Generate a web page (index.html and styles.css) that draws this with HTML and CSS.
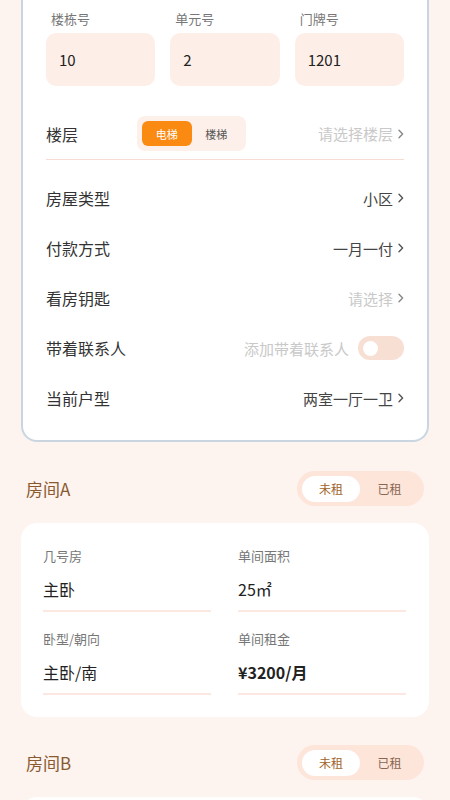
FILE: index.html
```html
<!DOCTYPE html>
<html lang="zh-CN">
<head>
<meta charset="utf-8">
<link rel="stylesheet" href="styles.css">
</head>
<body>
<div class="page">
  <div class="card main-card">
    <div class="addr">
      <div class="addr-col">
        <div class="addr-label">楼栋号</div>
        <div class="addr-input">10</div>
      </div>
      <div class="addr-col">
        <div class="addr-label">单元号</div>
        <div class="addr-input">2</div>
      </div>
      <div class="addr-col">
        <div class="addr-label">门牌号</div>
        <div class="addr-input">1201</div>
      </div>
    </div>
    <div class="floor-row">
      <div class="row-title floor-title">楼层</div>
      <div class="seg-small">
        <span class="seg-small-item active">电梯</span>
        <span class="seg-small-item">楼梯</span>
      </div>
      <div class="row-value placeholder">请选择楼层<svg class="chev" viewBox="0 0 6 10"><path d="M1 1.2 L4.6 5 L1 8.8" fill="none" stroke="currentColor" stroke-width="1.4" stroke-linecap="round" stroke-linejoin="round"/></svg></div>
    </div>
    <div class="rows">
      <div class="row">
        <div class="row-title">房屋类型</div>
        <div class="row-value">小区<svg class="chev" viewBox="0 0 6 10"><path d="M1 1.2 L4.6 5 L1 8.8" fill="none" stroke="currentColor" stroke-width="1.4" stroke-linecap="round" stroke-linejoin="round"/></svg></div>
      </div>
      <div class="row">
        <div class="row-title">付款方式</div>
        <div class="row-value">一月一付<svg class="chev" viewBox="0 0 6 10"><path d="M1 1.2 L4.6 5 L1 8.8" fill="none" stroke="currentColor" stroke-width="1.4" stroke-linecap="round" stroke-linejoin="round"/></svg></div>
      </div>
      <div class="row">
        <div class="row-title">看房钥匙</div>
        <div class="row-value placeholder">请选择<svg class="chev" viewBox="0 0 6 10"><path d="M1 1.2 L4.6 5 L1 8.8" fill="none" stroke="currentColor" stroke-width="1.4" stroke-linecap="round" stroke-linejoin="round"/></svg></div>
      </div>
      <div class="row">
        <div class="row-title">带着联系人</div>
        <div class="row-value placeholder">添加带着联系人<span class="switch"><span class="knob"></span></span></div>
      </div>
      <div class="row">
        <div class="row-title">当前户型</div>
        <div class="row-value">两室一厅一卫<svg class="chev" viewBox="0 0 6 10"><path d="M1 1.2 L4.6 5 L1 8.8" fill="none" stroke="currentColor" stroke-width="1.4" stroke-linecap="round" stroke-linejoin="round"/></svg></div>
      </div>
    </div>
  </div>

  <div class="section-head">
    <div class="section-title">房间A</div>
    <div class="seg">
      <span class="seg-item active">未租</span>
      <span class="seg-item">已租</span>
    </div>
  </div>
  <div class="card room-card">
    <div class="cell">
      <div class="cell-label">几号房</div>
      <div class="cell-value">主卧</div>
    </div>
    <div class="cell">
      <div class="cell-label">单间面积</div>
      <div class="cell-value">25㎡</div>
    </div>
    <div class="cell">
      <div class="cell-label">卧型/朝向</div>
      <div class="cell-value">主卧/南</div>
    </div>
    <div class="cell">
      <div class="cell-label">单间租金</div>
      <div class="cell-value bold">¥3200/月</div>
    </div>
  </div>

  <div class="section-head section-b">
    <div class="section-title">房间B</div>
    <div class="seg">
      <span class="seg-item active">未租</span>
      <span class="seg-item">已租</span>
    </div>
  </div>
  <div class="card room-card-empty"></div>
</div>
</body>
</html>
```

FILE: styles.css
```css
* { box-sizing: border-box; }
html, body {
  margin: 0;
  padding: 0;
  background: #fdf4f0;
  font-family: "Noto Sans CJK SC", "Noto Sans", sans-serif;
  color: #333;
}
.page {
  width: 450px;
  padding: 0 21px;
  overflow: hidden;
  height: 800px;
}
.card {
  background: #fff;
  border-radius: 16px;
}
.main-card {
  border: 2px solid #c9d6e1;
  border-top: none;
  border-radius: 0 0 16px 16px;
  padding: 10px 23px 17px;
}
.addr {
  display: grid;
  grid-template-columns: repeat(3, 1fr);
  column-gap: 15px;
}
.addr-label {
  font-size: 13px;
  line-height: 18px;
  color: #777;
  padding-left: 5px;
  margin-bottom: 5px;
}
.addr-input {
  height: 53px;
  border-radius: 10px;
  background: #fdefe8;
  display: flex;
  align-items: center;
  padding-left: 13px;
  font-size: 15px;
  color: #222;
}
.floor-row {
  display: flex;
  align-items: center;
  height: 52px;
  margin-top: 22px;
  border-bottom: 1px solid #f6ddd2;
}
.floor-title { width: 91px; }
.seg-small {
  display: flex;
  align-items: center;
  background: #fdf0ea;
  border-radius: 8px;
  height: 35px;
  padding: 0 5px;
  width: 109px;
}
.seg-small-item {
  width: 50px;
  height: 25px;
  display: flex;
  align-items: center;
  justify-content: center;
  font-size: 11px;
  color: #555;
  border-radius: 6px;
}
.seg-small-item.active {
  background: #fb8a12;
  color: #fff;
}
.floor-row .row-value { margin-left: auto; }
.rows { padding-top: 13px; }
.row {
  display: flex;
  align-items: center;
  justify-content: space-between;
  height: 50px;
}
.row-title {
  font-size: 16px;
  color: #333;
}
.row-value {
  display: flex;
  align-items: center;
  font-size: 15px;
  color: #444;
}
.row-value.placeholder { color: #c9c9c9; }
.chev {
  width: 6px;
  height: 10px;
  margin-left: 5px;
  color: #555;
}
.placeholder .chev { color: #888; }
.switch {
  width: 46px;
  height: 24px;
  border-radius: 12px;
  background: #f7dfd3;
  margin-left: 9px;
  display: flex;
  align-items: center;
  padding-left: 3px;
}
.knob {
  width: 15px;
  height: 15px;
  border-radius: 50%;
  background: #fff;
  margin-left: 2px;
}
.section-head {
  display: flex;
  align-items: center;
  justify-content: space-between;
  margin-top: 29px;
  padding: 0 5px;
  height: 35px;
}
.section-b { margin-top: 28px; }
.section-title {
  font-size: 17px;
  color: #8a5a2e;
}
.seg {
  display: flex;
  align-items: center;
  width: 127px;
  height: 35px;
  border-radius: 18px;
  background: #fde5da;
  padding: 0 5px;
}
.seg-item {
  width: 58px;
  height: 26px;
  border-radius: 13px;
  display: flex;
  align-items: center;
  justify-content: center;
  font-size: 12px;
  color: #8a6650;
}
.seg-item.active {
  background: #fff;
  color: #a0622a;
}
.seg-item + .seg-item { width: 59px; }
.room-card {
  margin-top: 17px;
  display: grid;
  grid-template-columns: 1fr 1fr;
  column-gap: 27px;
  row-gap: 18px;
  padding: 24px 23px 22px 22px;
}
.room-card-empty {
  margin-top: 17px;
  height: 195px;
}
.cell-label {
  font-size: 13px;
  line-height: 18px;
  color: #777;
}
.cell-value {
  font-size: 16px;
  line-height: 22px;
  margin-top: 13px;
  padding-bottom: 10px;
  border-bottom: 2px solid #fbe9e1;
  color: #222;
}
.cell-value.bold { font-weight: 700; }
```
